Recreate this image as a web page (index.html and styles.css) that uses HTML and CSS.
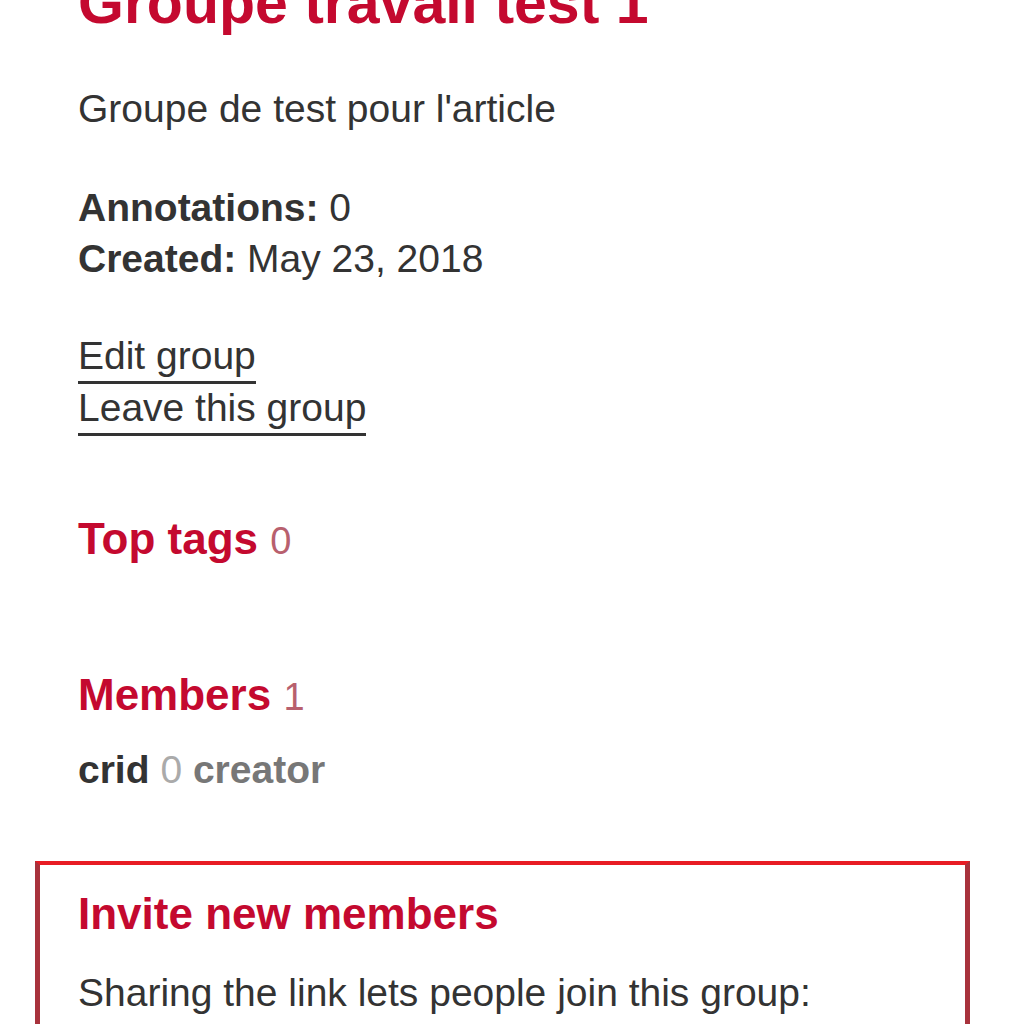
FILE: index.html
```html
<!DOCTYPE html>
<html lang="en">
<head>
    <meta charset="UTF-8">
    <meta name="viewport" content="width=device-width, initial-scale=1.0">
    <title>Groupe travail test 1</title>
    <link rel="stylesheet" href="styles.css">
</head>
<body>
    <div class="page">
        <div class="group-info">
            <h1 class="group-title">Groupe travail test 1</h1>
            <p class="group-desc">Groupe de test pour l'article</p>

            <div class="group-meta">
                <div><b>Annotations:</b> 0</div>
                <div><b>Created:</b> May 23, 2018</div>
            </div>

            <div class="group-actions">
                <div><a href="#" class="link">Edit group</a></div>
                <div><a href="#" class="link">Leave this group</a></div>
            </div>
        </div>

        <div class="section tags">
            <h2 class="section-title">Top tags <span class="count">0</span></h2>
        </div>

        <div class="section members">
            <h2 class="section-title">Members <span class="count">1</span></h2>
            <div class="member">
                <span class="member-name">crid</span>
                <span class="member-count">0</span>
                <span class="member-role">creator</span>
            </div>
        </div>

        <div class="invite-box">
            <h2 class="section-title invite-title">Invite new members</h2>
            <p class="invite-text">Sharing the link lets people join this group:</p>
        </div>
    </div>
</body>
</html>
```

FILE: styles.css
```css
body {
    margin: 0;
    font-family: "Liberation Sans", Arial, sans-serif;
    font-size: 39px;
    line-height: 51px;
    color: #333;
    background: white;
    overflow: hidden;
}
.page {
    padding: 0 54px 0 35px;
}
.group-info,
.section {
    padding-left: 43px;
}
.group-title {
    margin: -30px 0 0;
    font-size: 59px;
    line-height: 67px;
    font-weight: bold;
    color: #c4092f;
}
.group-desc {
    margin: 46px 0 0;
}
.group-meta {
    margin-top: 48px;
}
.group-actions {
    margin-top: 46px;
    line-height: 52px;
}
.link {
    color: #333;
    text-decoration: none;
    border-bottom: 3px solid #333;
    padding-bottom: 4px;
}
.section-title {
    margin: 0;
    font-size: 44px;
    line-height: 53px;
    font-weight: bold;
    color: #c4092f;
}
.count {
    font-weight: normal;
    font-size: 38px;
    color: #b8606e;
}
.tags {
    margin-top: 78px;
}
.members {
    margin-top: 100px;
}
.member {
    margin-top: 20px;
    font-weight: bold;
}
.member-name {
    color: #333;
}
.member-count {
    font-weight: normal;
    color: #aaa;
}
.member-role {
    color: #777;
}
.invite-box {
    margin-top: 66px;
    border: 5px solid #a8323c;
    border-top: 4px solid #e81c24;
    padding: 22px 38px 40px;
}
.invite-text {
    margin: 27px 0 0;
}
```
